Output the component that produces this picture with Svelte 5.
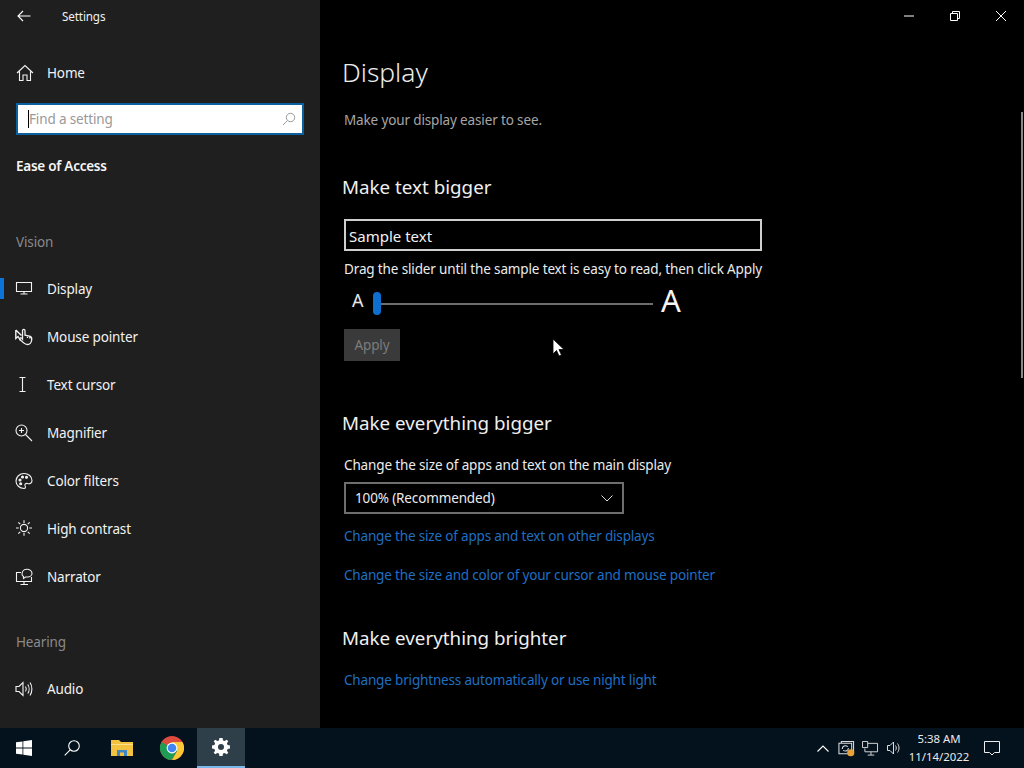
<script>
  const visionItems = [
    { label: 'Display', icon: 'display', active: true },
    { label: 'Mouse pointer', icon: 'mouse' },
    { label: 'Text cursor', icon: 'cursor' },
    { label: 'Magnifier', icon: 'magnifier' },
    { label: 'Color filters', icon: 'palette' },
    { label: 'High contrast', icon: 'sun' },
    { label: 'Narrator', icon: 'narrator' }
  ];
</script>

{#snippet navIcon(name)}
  <svg class="nav-icon" viewBox="0 0 18 18" fill="none" stroke="currentColor" stroke-width="1.1">
    {#if name === 'home'}
      <path d="M1 9 9 1.500 17 9M3.500 7.500V16.500H7V11H11V16.500H14.500V7.500" />
    {:else if name === 'display'}
      <path d="M1.500 2.500H16.500V11.500H1.500ZM9 11.500V14M5.500 14H12.500" />
    {:else if name === 'mouse'}
      <path d="M.8 2V10.500L3 8.500 5.500 12.500M.8 2 6.500 7.500" stroke-width="1.400" />
      <path d="M7.500 11V2.800C7.500 1 10 1 10 2.800V7.200L14.500 8.200C16.500 8.700 17 10 16.700 12 16.300 14.500 15 16.500 12.500 16.500 9.500 16.500 8 14.500 5 11.500 4.500 10 6 9 7.500 11ZM12.500 7.700V10M14.800 8.300V10.500" stroke-width="1.300" />
    {:else if name === 'cursor'}
      <path d="M4.500 1.500H10.500M4.500 15.500H10.500M7.500 1.500V15.500" />
    {:else if name === 'magnifier'}
      <circle cx="6.500" cy="6.500" r="5.500" /><path d="M10.500 10.500 17 17M4 6.500H9M6.500 4V9" />
    {:else if name === 'palette'}
      <path d="M9 1.500C4.500 1.500 1 5 1 9S4.500 16.500 9 16.500C11 16.500 10.500 14.500 10 13.500 9.500 12 11 11 12.500 11.500 15 12.300 17 11 17 8.500 17 4.500 13.500 1.500 9 1.500Z" />
      <circle cx="5" cy="8" r="1" fill="currentColor" /><circle cx="7.500" cy="5" r="1" fill="currentColor" /><circle cx="11.500" cy="5.200" r="1" fill="currentColor" /><circle cx="5.700" cy="11.700" r="1" fill="currentColor" />
    {:else if name === 'sun'}
      <circle cx="9" cy="8" r="3.600" /><path d="M9 .2V2.900M9 13.100V15.800M1 8H3.700M14.300 8H17M3.300 2.300 5.200 4.200M12.800 11.800 14.700 13.700M3.300 13.700 5.200 11.800M12.800 4.200 14.700 2.300" />
    {:else if name === 'narrator'}
      <path d="M6 4.500H1.500V13.500H16.500V9M9 13.500V16.500M5.500 16.500H13M7 6C7 3 9.500 1.200 12 1.200S17 3 17 5.200 15 9 12.500 9H10.500L8.500 10.500V8.500C7.500 8 7 7 7 6Z" />
    {:else if name === 'audio'}
      <path d="M1 6.500H4L8 2.500V15.500L4 11.500H1ZM10.500 6.500C11.500 8 11.500 10 10.500 11.500M12.800 4.500C14.500 7 14.500 11 12.800 13.500M15 2.500C17.500 6 17.500 12 15 15.500" />
    {/if}
  </svg>
{/snippet}

<div class="screen">
  <div class="window">
    <aside class="sidebar">
      <header class="side-title">
        <svg class="back" viewBox="0 0 14 12" fill="none" stroke="#fff" stroke-width="1.1"><path d="M13.500 6H1M6 1 1 6 6 11" /></svg>
        <span>Settings</span>
      </header>
      <div class="nav-item home">{@render navIcon('home')}<span>Home</span></div>
      <div class="search">
        <i class="caret"></i><span>Find a setting</span>
        <svg viewBox="0 0 14 14" fill="none" stroke="#9a9a9a" stroke-width="1"><circle cx="8.500" cy="5.500" r="4.200" /><path d="M5.500 8.500 1 13" /></svg>
      </div>
      <h2 class="category">Ease of Access</h2>
      <h3 class="group vision">Vision</h3>
      <nav>
        {#each visionItems as item}
          <div class="nav-item" class:active={item.active}>{@render navIcon(item.icon)}<span>{item.label}</span></div>
        {/each}
      </nav>
      <h3 class="group hearing">Hearing</h3>
      <div class="nav-item">{@render navIcon('audio')}<span>Audio</span></div>
    </aside>

    <main class="content">
      <div class="caption-buttons">
        <svg viewBox="0 0 46 32"><path d="M18 16H28" stroke="#fff" /></svg>
        <svg viewBox="0 0 46 32" fill="none" stroke="#fff"><path d="M18.500 13.500H25.500V20.500H18.500ZM20.500 13.500V11.500H27.500V18.500H25.500" /></svg>
        <svg viewBox="0 0 46 32" fill="none" stroke="#fff"><path d="M18 11 28 21M28 11 18 21" /></svg>
      </div>
      <h1>Display</h1>
      <p class="subtitle">Make your display easier to see.</p>

      <h2 class="section first">Make text bigger</h2>
      <div class="sample">Sample text</div>
      <p class="hint">Drag the slider until the sample text is easy to read, then click Apply</p>
      <div class="slider-row">
        <span class="a-small">A</span>
        <div class="slider"><i class="thumb"></i></div>
        <span class="a-big">A</span>
      </div>
      <div class="apply">Apply</div>

      <h2 class="section second">Make everything bigger</h2>
      <p class="label">Change the size of apps and text on the main display</p>
      <div class="select">
        <span>100% (Recommended)</span>
        <svg viewBox="0 0 12 7" fill="none" stroke="#ddd" stroke-width="1"><path d="M.5 .5 6 6 11.500 .5" /></svg>
      </div>
      <a class="link one" href="#a">Change the size of apps and text on other displays</a>
      <a class="link two" href="#b">Change the size and color of your cursor and mouse pointer</a>

      <h2 class="section third">Make everything brighter</h2>
      <a class="link three" href="#c">Change brightness automatically or use night light</a>

      <i class="scrollbar"></i>
      <svg class="pointer" viewBox="0 0 12 19"><path d="M1 1V16L4.500 12.500 7 18 9.500 17 7 11.500H12Z" fill="#fff" stroke="#000" stroke-width=".8" /></svg>
    </main>
  </div>

  <footer class="taskbar">
    <div class="tb-left">
      <div class="tb-btn start">
        <svg viewBox="0 0 16 16" fill="#fff"><path d="M0 2.300 6.500 1.400V7.600H0ZM7.300 1.300 16 0V7.600H7.300ZM0 8.400H6.500V14.600L0 13.700ZM7.300 8.400H16V16L7.300 14.700Z" /></svg>
      </div>
      <div class="tb-btn magnify">
        <svg viewBox="0 0 16 16" fill="none" stroke="#fff" stroke-width="1.100"><circle cx="10" cy="6" r="5.300" /><path d="M6.200 9.800 .7 15.300" /></svg>
      </div>
      <div class="tb-btn">
        <svg class="wide" viewBox="0 0 22 18"><path d="M0 1H8L10 3H22V17H0Z" fill="#f3c240" /><path d="M0 5H22V6H0Z" fill="#fbe08c" /><path d="M6 11H16V17H13V13.500H9V17H6Z" fill="#3f88c5" /></svg>
      </div>
      <div class="tb-btn browser">
        <svg class="chrome" viewBox="0 0 24 24">
          <circle cx="12" cy="12" r="12" fill="#dd4b3e" />
          <path d="M12 12 1.600 6A12 12 0 0 0 12 24L18 13.500Z" fill="#1f9d55" />
          <path d="M12 6H22.400A12 12 0 0 1 12 24L17.200 15Z" fill="#fcc934" />
          <circle cx="12" cy="12" r="5.400" fill="#fff" /><circle cx="12" cy="12" r="4.300" fill="#4285f4" />
        </svg>
      </div>
      <div class="tb-btn running">
        <svg viewBox="0 0 18 18"><path fill="#fff" fill-rule="evenodd" d="M7.400 0H10.600L11 2.400 12.700 3.100 14.700 1.700 16.300 3.300 14.900 5.300 15.600 7 18 7.400V10.600L15.600 11 14.900 12.700 16.300 14.700 14.700 16.300 12.700 14.900 11 15.600 10.600 18H7.400L7 15.600 5.300 14.900 3.300 16.300 1.700 14.700 3.100 12.700 2.400 11 0 10.600V7.400L2.400 7 3.100 5.300 1.700 3.300 3.300 1.700 5.300 3.100 7 2.400ZM9 6A3 3 0 1 0 9 12 3 3 0 1 0 9 6Z" /></svg>
      </div>
    </div>
    <div class="tray">
      <svg class="t-up" viewBox="0 0 12 7" fill="none" stroke="#fff" stroke-width="1.100"><path d="M.5 6.500 6 1 11.500 6.500" /></svg>
      <svg class="t-update" viewBox="0 0 18 18" fill="none" stroke="#ddd" stroke-width="1.100">
        <path d="M3.500 3V1.500H16.500V12H15M1 3.500H14.500V14.500H1ZM4.500 9.500C4.500 6.500 7.500 5 10.500 7M11 8.500C11 11.500 8 12.500 5.500 11" />
        <circle cx="13.500" cy="13.500" r="3.800" fill="#e9a13a" stroke="none" />
      </svg>
      <svg class="t-net" viewBox="0 0 18 16" fill="none" stroke="#ddd" stroke-width="1"><path d="M6 2.500H16.500V11.500H3V8M9.500 11.500V15M6 15H13M.5 .5H6V7H.5Z" /></svg>
      <svg class="t-vol" viewBox="0 0 14 14" fill="none" stroke="#ddd" stroke-width="1"><path d="M.5 4.500H3L6.500 1V13L3 9.500H.5ZM8.500 4.500C9.500 6 9.500 8 8.500 9.500M10.500 2.500C12.500 5.500 12.500 8.500 10.500 11.500" /></svg>
      <div class="clock"><span>5:38 AM</span><span>11/14/2022</span></div>
      <svg class="t-notify" viewBox="0 0 16 15" fill="none" stroke="#eee" stroke-width="1"><path d="M.5 .5H15.500V11.500H10.500L8 14 5.500 11.500H.5Z" /></svg>
    </div>
  </footer>
</div>

<style>
  :global(body) {
    margin: 0;
    background: #000;
    font-family: "Noto Sans", "Open Sans", sans-serif;
  }
  .screen {
    width: 1024px;
    height: 768px;
    display: flex;
    flex-direction: column;
    overflow: hidden;
    color: #fff;
    font-size: 13.5px;
    letter-spacing: -0.14px;
  }
  .window {
    flex: 1;
    display: flex;
    min-height: 0;
  }
  .sidebar {
    width: 320px;
    flex: none;
    background: #1f1f1f;
    display: flex;
    flex-direction: column;
    overflow: hidden;
  }
  .side-title {
    height: 32px;
    display: flex;
    align-items: center;
    font-size: 11.7px;
    padding-left: 17px;
    color: #f0f0f0;
  }
  .back {
    width: 14px;
    height: 12px;
    margin-right: 31px;
  }
  .nav-item {
    height: 48px;
    flex: none;
    display: flex;
    align-items: center;
    padding-left: 16px;
    position: relative;
    color: #f2f2f2;
  }
  .nav-item.home {
    margin-top: 18px;
    margin-bottom: 7px;
    height: 46px;
  }
  .nav-icon {
    width: 18px;
    height: 18px;
    margin: 0 14px 0 -1px;
    flex: none;
  }
  .home .nav-icon {
    margin: 0 13px 0 0;
  }
  .active::before {
    content: "";
    position: absolute;
    left: 0;
    top: 13px;
    width: 4px;
    height: 21px;
    background: #0a74da;
  }
  .search {
    margin: 0 16px;
    width: 288px;
    height: 32px;
    border: 2px solid #0b609f;
    background: #fff;
    display: flex;
    align-items: center;
    padding: 0 6px 0 10px;
    color: #999;
    flex: none;
    box-sizing: border-box;
  }
  .search svg {
    width: 14px;
    height: 14px;
    margin-left: auto;
  }
  .caret {
    width: 1px;
    height: 18px;
    background: #000;
  }
  .category {
    margin: 21px 0 0 16px;
    font-size: 13.5px;
    line-height: 20px;
    font-weight: 600;
    letter-spacing: -0.25px;
    color: #f5f5f5;
  }
  .group {
    margin: 0 0 0 16px;
    font-size: inherit;
    line-height: 20px;
    font-weight: 400;
    color: #8a8a8a;
  }
  .vision {
    margin-top: 56px;
    margin-bottom: 13px;
  }
  .hearing {
    margin-top: 31px;
    margin-bottom: 13px;
  }
  .content {
    flex: 1;
    position: relative;
    background: #000;
    padding-left: 24px;
    overflow: hidden;
  }
  .caption-buttons {
    position: absolute;
    top: 0;
    right: 0;
    display: flex;
  }
  .caption-buttons svg {
    width: 46px;
    height: 32px;
  }
  h1 {
    margin: 53px 0 0 -2px;
    font-size: 26.4px;
    line-height: 38px;
    font-weight: 300;
    letter-spacing: 0;
    color: #ececec;
  }
  .subtitle {
    margin: 19px 0 0;
    line-height: 20px;
    color: #a6a6a6;
  }
  .section {
    margin: 0 0 0 -2px;
    font-size: 18.8px;
    line-height: 26px;
    font-weight: 400;
    letter-spacing: 0;
    color: #efefef;
  }
  .first {
    margin-top: 44px;
  }
  .sample {
    margin-top: 19px;
    width: 418px;
    height: 32px;
    box-sizing: border-box;
    border: 2px solid #cfcfcf;
    padding-left: 3px;
    font-size: 15px;
    line-height: 30px;
    letter-spacing: 0;
    color: #f2f2f2;
  }
  .hint {
    margin: 8px 0 0;
    line-height: 20px;
    color: #ececec;
  }
  .slider-row {
    display: flex;
    align-items: center;
    height: 36px;
    margin-top: 5px;
  }
  .a-small {
    margin: -4px 0 0 8px;
    font-size: 18px;
    width: 21px;
    letter-spacing: 0;
    color: #e8e8e8;
  }
  .slider {
    width: 280px;
    height: 2px;
    background: #6e6e6e;
    position: relative;
    margin-top: 4px;
  }
  .thumb {
    position: absolute;
    left: 0;
    top: -11px;
    width: 8px;
    height: 23px;
    border-radius: 4px;
    background: #0f6fd1;
  }
  .a-big {
    margin: -4px 0 0 8px;
    font-size: 31px;
    line-height: 36px;
    letter-spacing: 0;
    color: #f5f5f5;
  }
  .apply {
    margin-top: 9px;
    width: 56px;
    height: 32px;
    background: #3a3a3a;
    color: #7c7c7c;
    text-align: center;
    line-height: 32px;
  }
  .second {
    margin-top: 49px;
  }
  .label {
    margin: 19px 0 0;
    line-height: 20px;
    color: #ececec;
  }
  .select {
    margin-top: 7px;
    width: 280px;
    height: 32px;
    box-sizing: border-box;
    border: 2px solid #6e6e6e;
    display: flex;
    align-items: center;
    justify-content: space-between;
    padding: 0 9px 0 9px;
    color: #ececec;
  }
  .select svg {
    width: 12px;
    height: 7px;
  }
  .link {
    display: block;
    line-height: 20px;
    letter-spacing: -0.17px;
    color: #1f6fc4;
    text-decoration: none;
  }
  .one {
    margin-top: 12px;
  }
  .two {
    margin-top: 19px;
  }
  .third {
    margin-top: 40px;
  }
  .three {
    margin-top: 19px;
  }
  .scrollbar {
    position: absolute;
    right: 1px;
    top: 112px;
    width: 2px;
    height: 266px;
    background: #8a8a8a;
  }
  .pointer {
    position: absolute;
    left: 232px;
    top: 338px;
    width: 12px;
    height: 19px;
  }
  .taskbar {
    height: 40px;
    flex: none;
    background: #03121c;
    display: flex;
    justify-content: space-between;
  }
  .tb-left {
    display: flex;
  }
  .tb-btn {
    width: 48px;
    height: 40px;
    box-sizing: border-box;
    display: flex;
    align-items: center;
    justify-content: center;
  }
  .magnify,
  .tb-btn:nth-child(3) {
    margin-right: 2px;
  }
  .browser {
    margin-right: 1px;
  }
  .tb-btn svg {
    width: 16px;
    height: 16px;
  }
  .tb-btn svg.wide {
    width: 22px;
    height: 18px;
  }
  .tb-btn svg.chrome {
    width: 24px;
    height: 24px;
  }
  .tb-btn.running svg {
    width: 18px;
    height: 18px;
  }
  .running {
    background: #2f3f49;
    border-bottom: 2px solid #79b8e8;
  }
  .tray {
    display: flex;
    align-items: center;
    color: #eaeaea;
  }
  .t-up {
    width: 12px;
    height: 7px;
    margin-right: 9px;
  }
  .t-update {
    width: 17px;
    height: 17px;
    margin-right: 7px;
  }
  .t-net {
    width: 17px;
    height: 15px;
    margin-right: 8px;
  }
  .t-vol {
    width: 14px;
    height: 14px;
    margin-right: 5px;
  }
  .clock {
    display: flex;
    flex-direction: column;
    align-items: center;
    font-size: 11.4px;
    line-height: 18px;
    letter-spacing: 0;
    width: 66px;
  }
  .t-notify {
    width: 16px;
    height: 15px;
    margin: 0 24px 0 12px;
  }
</style>
